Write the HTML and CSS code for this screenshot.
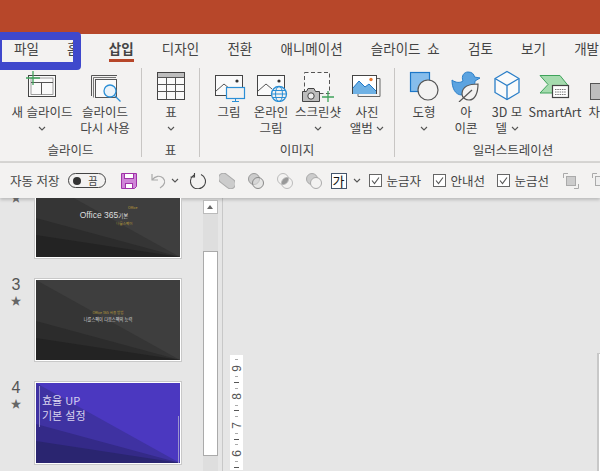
FILE: index.html
```html
<!DOCTYPE html>
<html lang="ko">
<head>
<meta charset="UTF-8">
<meta name="viewport" content="width=device-width, initial-scale=1.0">
<title>PowerPoint</title>
<link rel="stylesheet" href="styles.css">
</head>
<body>
<svg class="defs" width="0" height="0">
  <symbol id="chev" viewBox="0 0 8 5"><path d="M1 1l3 3 3-3" fill="none" stroke="#555" stroke-width="1.1"/></symbol>
  <symbol id="check" viewBox="0 0 13 13"><rect x=".5" y=".5" width="12" height="12" fill="#fff" stroke="#666"/><path d="M3 6.5l2.5 3L10 3.5" fill="none" stroke="#555" stroke-width="1.1"/></symbol>
</svg>
<div class="titlebar"></div>
<div class="tabs">
  <span>파일</span>
  <span class="tab-home">홈</span>
  <span class="tab-active">삽입</span>
  <span>디자인</span>
  <span>전환</span>
  <span>애니메이션</span>
  <span class="tab-show">슬라이드 쇼</span>
  <span>검토</span>
  <span>보기</span>
  <span>개발</span>
</div>
<div class="highlight"></div>

<div class="ribbon">
  <section class="group group-slide">
    <div class="items">
      <div class="btn w68">
        <svg class="ico" viewBox="0 0 40 34"><rect x="6.500" y="7.500" width="27" height="21" fill="#fafafa" stroke="#444"/><rect x="9" y="10" width="22" height="16.500" fill="none" stroke="#777" stroke-width=".7"/><path d="M9 14.500h22M19.500 14.500v12" stroke="#555" fill="none"/><path d="M11 3v14M4 10h14" stroke="#3fa35b" stroke-width="1.300"/></svg>
        <div class="lbl">새 슬라이드</div>
        <svg class="chev"><use href="#chev"/></svg>
      </div>
      <div class="btn w58">
        <svg class="ico" viewBox="0 0 40 34"><path d="M6.500 28V7.500H32" fill="none" stroke="#555"/><path d="M8.500 29.500V9.500H31" fill="none" stroke="#777"/><rect x="10.500" y="11.500" width="21" height="18" fill="#fafafa" stroke="#555"/><circle cx="25" cy="23" r="6" fill="#eaf3fa" stroke="#2b8fd6" stroke-width="1.300"/><path d="M29.500 27.500l6 6" stroke="#2b8fd6" stroke-width="1.300"/></svg>
        <div class="lbl">슬라이드<br>다시 사용</div>
      </div>
    </div>
    <div class="group-name">슬라이드</div>
  </section>
  <section class="group group-table">
    <div class="items">
      <div class="btn w42">
        <svg class="ico" viewBox="0 0 40 34"><rect x="6.500" y="4.500" width="27" height="27" fill="#fafafa" stroke="#444"/><rect x="7" y="5" width="26" height="4" fill="#bdbdbd"/><path d="M6.500 9.500h27M6.500 16.500h27M6.500 23.500h27M15.500 9.500v22M24.500 9.500v22" stroke="#555" fill="none"/></svg>
        <div class="lbl">표</div>
        <svg class="chev"><use href="#chev"/></svg>
      </div>
    </div>
    <div class="group-name">표</div>
  </section>
  <section class="group group-image">
    <div class="items">
      <div class="btn w42">
        <svg class="ico" viewBox="0 0 40 34"><rect x="6.500" y="7.500" width="27" height="20" fill="#fafafa" stroke="#444"/><path d="M7 23l8-7 6 5" fill="none" stroke="#555"/><circle cx="28" cy="13" r="1.600" fill="#333"/><rect x="17.500" y="19.500" width="18" height="11" fill="#f3f2f1" stroke="#2b8fd6" stroke-width="1.200"/><path d="M26.500 30.500v3M23 33.500h7" stroke="#2b8fd6"/></svg>
        <div class="lbl">그림</div>
      </div>
      <div class="btn w42">
        <svg class="ico" viewBox="0 0 40 34"><rect x="6.500" y="7.500" width="27" height="20" fill="#fafafa" stroke="#444"/><path d="M7 23l8-7 6 5" fill="none" stroke="#555"/><circle cx="28" cy="13" r="1.600" fill="#333"/><circle cx="28" cy="26" r="7.500" fill="#f3f2f1" stroke="#2b8fd6" stroke-width="1.300"/><ellipse cx="28" cy="26" rx="3.500" ry="7.500" fill="none" stroke="#2b8fd6"/><path d="M20.500 26h15M21.500 22.500h13M21.500 29.500h13" stroke="#2b8fd6" fill="none"/></svg>
        <div class="lbl">온라인<br>그림</div>
      </div>
      <div class="btn w52">
        <svg class="ico" viewBox="0 0 40 34"><rect x="6.500" y="4.500" width="25" height="21" fill="#f8f8f8" stroke="#555" stroke-dasharray="4 2.500"/><path d="M4.500 23.500h4l1.500-3h6l1.500 3h4v10h-17z" fill="#bdbdbd" stroke="#444"/><circle cx="13" cy="28" r="3.200" fill="#eee" stroke="#444"/><path d="M30 23v12M24 29h12" stroke="#3fa35b" stroke-width="1.300"/></svg>
        <div class="lbl">스크린샷</div>
        <svg class="chev"><use href="#chev"/></svg>
      </div>
      <div class="btn w46">
        <svg class="ico" viewBox="0 0 40 34"><path d="M29.500 10.500h3.500v18H11v-3" fill="#f3f2f1" stroke="#666"/><rect x="5.500" y="7.500" width="24" height="18" fill="#fff" stroke="#444"/><path d="M6 24V20l6-7 6 6 4-3 7 7v3H6z" fill="#6fb1e4"/><path d="M6 20l6-7 6 6 4-3 7 7" fill="none" stroke="#1d77c8"/><circle cx="24" cy="11.500" r="1.700" fill="#e8772e"/></svg>
        <div class="lbl">사진<br><span class="inline-chev">앨범 <svg class="chev"><use href="#chev"/></svg></span></div>
      </div>
    </div>
    <div class="group-name">이미지</div>
  </section>
  <section class="group group-illust">
    <div class="items">
      <div class="btn w42">
        <svg class="ico" viewBox="0 0 40 34"><rect x="6.500" y="4.500" width="19" height="19" fill="#86bdec" stroke="#1d77c8" stroke-width="1.200"/><circle cx="24" cy="22" r="10" fill="#f3f2f1" stroke="#555" stroke-width="1.200"/></svg>
        <div class="lbl">도형</div>
        <svg class="chev"><use href="#chev"/></svg>
      </div>
      <div class="btn w42">
        <svg class="ico" viewBox="0 0 40 34"><path d="M6 12C10 15 14 15 17 13 15 8 18 4 22 4 26 4 28 6 28.500 9L34 10 29 13C29 20 24 27 16 27 9 27 6 20 6 12z" fill="#5ba3e0" stroke="#2b7fc8"/><path d="M32 16C24 16 16 18 16 26 16 30 20 32 23 32 29 32 32 25 32 16z" fill="#f3f2f1" stroke="#555" stroke-width="1.200"/><path d="M13 34L26 22" stroke="#555" stroke-width="1.200"/></svg>
        <div class="lbl">아<br>이콘</div>
      </div>
      <div class="btn w40">
        <svg class="ico" viewBox="0 0 40 34"><path d="M20 3.500l12 7v14l-12 7-12-7v-14z" fill="#fafafa" stroke="#2b7fc8" stroke-width="1.300"/><path d="M8 10.500l12 7 12-7M20 17.500v14" fill="none" stroke="#2b7fc8" stroke-width="1.300"/></svg>
        <div class="lbl">3D 모<br><span class="inline-chev">델 <svg class="chev"><use href="#chev"/></svg></span></div>
      </div>
      <div class="btn w56">
        <svg class="ico" viewBox="0 0 40 34"><path d="M5 7.500h20l8 10-8 7.500H5l8-8.500z" fill="#a5dbae" stroke="#3fa35b"/><rect x="17.500" y="17.500" width="16" height="12" fill="#fff" stroke="#444" stroke-width="1.200"/><path d="M20 21.500h11M20 24h11M20 26.500h11" stroke="#555" stroke-width=".8" stroke-dasharray="1.500 .8"/></svg>
        <div class="lbl">SmartArt</div>
      </div>
      <div class="btn w34">
        <svg class="ico" viewBox="0 0 40 34"><rect x="10.500" y="15.500" width="10" height="16" fill="#bdbdbd" stroke="#555"/><rect x="20.500" y="4.500" width="10" height="27" fill="#f3f2f1" stroke="#555"/></svg>
        <div class="lbl">차트</div>
      </div>
    </div>
    <div class="group-name">일러스트레이션</div>
  </section>
</div>

<div class="qat">
  <span class="autosave">자동 저장</span>
  <span class="toggle"><i></i><b>끔</b></span>
  <svg class="qi save" viewBox="0 0 16 16"><path d="M.5.5h15v13l-2 2H.500z" fill="#cf86d8" stroke="#a033a8"/><rect x="3.500" y=".5" width="9" height="5" fill="#fff" stroke="#a033a8"/><rect x="4.500" y="10.500" width="7" height="5" fill="#fff" stroke="#a033a8"/></svg>
  <svg class="qi undo" viewBox="0 0 16 16"><path d="M1 1v6h6M1 7c3-4 8-5 11-2s2 7-3 10" fill="none" stroke="#aaa" stroke-width="1.200"/></svg>
  <svg class="chev undo-chev"><use href="#chev"/></svg>
  <svg class="qi redo" viewBox="0 0 16 16"><path d="M11 1.500A7.500 7.500 0 1 1 4 2M4.500 0v4h-4" fill="none" stroke="#444" stroke-width="1.100"/></svg>
  <svg class="qi merge" viewBox="0 0 16 16"><rect x="-1.500" y="3" width="19" height="10" rx="5" transform="rotate(38 8 8)" fill="#ccc" stroke="#aaa"/></svg>
  <svg class="qi merge" viewBox="0 0 16 16"><circle cx="6" cy="6" r="5.500" fill="#ccc" stroke="#999"/><circle cx="10" cy="10" r="5.500" fill="#ddd" fill-opacity=".6" stroke="#888"/></svg>
  <svg class="qi merge" viewBox="0 0 16 16"><circle cx="6" cy="6" r="5.500" fill="none" stroke="#bbb"/><circle cx="10" cy="10" r="5.500" fill="none" stroke="#bbb"/><path d="M11 5a5 5 0 0 1-6 6 5 5 0 0 1 6-6z" fill="#999"/></svg>
  <svg class="qi merge" viewBox="0 0 16 16"><circle cx="6" cy="6" r="5.500" fill="#ccc" stroke="#aaa"/><circle cx="10" cy="10" r="5.500" fill="#f3f2f1" stroke="#aaa"/></svg>
  <span class="ga">가</span>
  <svg class="chev ga-chev"><use href="#chev"/></svg>
  <label class="chk first-chk"><svg><use href="#check"/></svg>눈금자</label>
  <label class="chk"><svg><use href="#check"/></svg>안내선</label>
  <label class="chk"><svg><use href="#check"/></svg>눈금선</label>
  <svg class="qi arr first-arr" viewBox="0 0 16 16"><path d="M5 .5H.5V5M11 15.500h4.500V11" fill="none" stroke="#aaa"/><rect x="3.500" y="3.500" width="9" height="9" fill="#ccc" stroke="#aaa"/></svg>
  <svg class="qi arr" viewBox="0 0 16 16"><path d="M5 .5H.5V5M11 15.500h4.500V11" fill="none" stroke="#aaa"/><rect x="3.500" y="3.500" width="9" height="9" fill="#eee" stroke="#aaa"/></svg>
</div>

<div class="main">
  <div class="thumbs">
    <div class="thumb-row">
      <div class="num"><span>2</span><em>★</em></div>
      <div class="slide">
        <svg class="rays" viewBox="0 0 144 80" preserveAspectRatio="none"><rect width="144" height="80" fill="#3e3e3e"/><path d="M0 0L144 80H0z" fill="#353535"/><path d="M0 41L144 80H0z" fill="#2c2c2c"/><path d="M0 58L144 80H0z" fill="#232323"/></svg>
        <div class="cover-text end">
          <span class="tiny upper">Office</span>
          <span class="big">Office 365<small>기본</small></span>
          <span class="tiny lower">나를스펙이</span>
        </div>
      </div>
    </div>
    <div class="thumb-row">
      <div class="num"><span>3</span><em>★</em></div>
      <div class="slide">
        <svg class="rays" viewBox="0 0 144 80" preserveAspectRatio="none"><rect width="144" height="80" fill="#3e3e3e"/><path d="M0 0L144 80H0z" fill="#353535"/><path d="M0 41L144 80H0z" fill="#2c2c2c"/><path d="M0 58L144 80H0z" fill="#232323"/></svg>
        <div class="cover-text raised"><span class="tiny">Office 365 사용 방법</span><span class="tiny white">나를스펙이 다음스펙의 능력</span></div>
      </div>
    </div>
    <div class="thumb-row">
      <div class="num"><span>4</span><em>★</em></div>
      <div class="slide">
        <svg class="rays" viewBox="0 0 144 80" preserveAspectRatio="none"><rect width="144" height="80" fill="#4b38c0"/><path d="M0 0L144 80H0z" fill="#3f32a2"/><path d="M0 41L144 80H0z" fill="#342a88"/><path d="M0 58L144 80H0z" fill="#2a2570"/><path d="M3.500 3v41M142.500 33v47" stroke="#9a94cc"/></svg>
        <div class="purple-text">효율 UP<br>기본 설정</div>
      </div>
    </div>
  </div>
  <div class="scrollbar">
    <div class="scroll-btn"></div>
    <div class="scroll-thumb"></div>
  </div>
  <div class="workspace">
    <div class="ruler">
      <div class="mark"><i></i><span>9</span><i></i><u></u></div>
      <div class="mark"><i></i><span>8</span><i></i><u></u></div>
      <div class="mark"><i></i><span>7</span><i></i><u></u></div>
      <div class="mark"><i></i><span>6</span><i></i><u></u></div>
    </div>
    <div class="page"></div>
  </div>
</div>
</body>
</html>
```

FILE: styles.css
```css
html, body {
  height: 100%;
  margin: 0;
}

body {
  width: 600px;
  height: 471px;
  overflow: hidden;
  position: relative;
  background-color: #e6e6e6;
  color: #444;
  font-family: "Noto Sans CJK KR", "Noto Sans", sans-serif;
  font-size: 12.5px;
}

.defs {
  position: absolute;
}

.titlebar {
  height: 34px;
  background-color: #b7472a;
}

.tabs {
  height: 28px;
  display: flex;
  align-items: center;
  gap: 28.25px;
  padding: 0 0 0 14px;
  background-color: #f3f2f1;
  white-space: nowrap;
  font-size: 13.5px;
  line-height: 28px;
  overflow: hidden;
}

.tab-home {
  margin-right: 1px;
}

.tab-show {
  word-spacing: 3px;
}

.tab-active {
  font-weight: 700;
  color: #444;
  position: relative;
}

.tab-active::after {
  content: "";
  position: absolute;
  left: 0;
  right: 0;
  bottom: 0;
  height: 3px;
  background-color: #b7472a;
}

.highlight {
  position: absolute;
  left: -6px;
  top: 32px;
  width: 71px;
  height: 22px;
  border: 8px solid #3f48cc;
  border-radius: 4px;
}

.ribbon {
  height: 99px;
  display: flex;
  background-color: #f3f2f1;
  border-bottom: 2px solid #d6d5d3;
  overflow: hidden;
}

.group {
  flex: none;
  display: flex;
  flex-direction: column;
  border-right: 1px solid #c8c6c4;
  margin-top: 6px;
  height: 89px;
  box-sizing: border-box;
}

.group-slide { width: 142px; padding-left: 8px; }
.group-table { width: 58px; padding-left: 8px; }
.group-image { width: 195px; padding-left: 8px; }
.group-illust { width: 236px; padding-left: 8px; border-right: none; }

.items {
  display: flex;
  flex: none;
  height: 75px;
}

.btn {
  flex: none;
  display: flex;
  flex-direction: column;
  align-items: center;
  text-align: center;
}

.w34 { width: 34px; }
.w40 { width: 40px; }
.w42 { width: 42px; }
.w46 { width: 46px; }
.w52 { width: 52px; }
.w56 { width: 56px; }
.w58 { width: 58px; }
.w68 { width: 68px; }

.ico {
  flex: none;
  width: 40px;
  height: 34px;
}

.lbl {
  margin-top: 2px;
  line-height: 16px;
  white-space: nowrap;
}

.btn > .chev {
  margin-top: 6px;
}

.chev {
  width: 8px;
  height: 5px;
  flex: none;
}

.inline-chev .chev {
  vertical-align: 2px;
}

.group-name {
  flex: none;
  margin-left: -8px;
  text-align: center;
  line-height: 14px;
}

.qat {
  height: 35px;
  display: flex;
  align-items: center;
  padding-left: 10px;
  background-color: #f3f2f1;
  box-shadow: 0 2px 3px rgba(0, 0, 0, 0.18);
  position: relative;
  white-space: nowrap;
  overflow: hidden;
}

.qat > * {
  flex: none;
}

.toggle {
  width: 38px;
  height: 15px;
  box-sizing: border-box;
  margin-left: 8px;
  display: flex;
  align-items: center;
  justify-content: space-between;
  padding: 0 7px 0 4px;
  border: 1px solid #444;
  border-radius: 8px;
  font-size: 10px;
  line-height: 13px;
}

.toggle i {
  width: 8px;
  height: 8px;
  border-radius: 50%;
  background-color: #333;
}

.toggle b {
  font-weight: 400;
}

.qi {
  width: 16px;
  height: 16px;
}

.save { margin-left: 15px; }
.undo { margin-left: 14px; }
.undo-chev { margin-left: 4px; }
.redo { margin-left: 11px; }
.merge { margin-left: 13px; }

.ga {
  margin-left: 9px;
  width: 16px;
  height: 16px;
  box-sizing: border-box;
  border: 1px solid #44546a;
  background-color: #fff;
  color: #111;
  font-size: 13px;
  line-height: 14px;
  text-align: center;
  overflow: hidden;
}

.ga-chev { margin-left: 6px; }

.chk {
  display: flex;
  align-items: center;
  gap: 5px;
  margin-left: 11.500px;
}

.chk svg {
  width: 13px;
  height: 13px;
}

.first-chk { margin-left: 8px; }
.first-arr { margin-left: 14px; }
.arr + .arr { margin-left: 13px; }

.main {
  height: 273px;
  display: flex;
  overflow: hidden;
}

.thumbs {
  flex: none;
  width: 203px;
  margin-top: -23px;
  padding-left: 34px;
  box-sizing: border-box;
}

.thumb-row {
  display: flex;
  height: 84px;
  margin-bottom: 19px;
  position: relative;
}

.num {
  position: absolute;
  left: -34px;
  top: -2px;
  width: 32px;
  text-align: center;
  color: #555;
  font-family: "Liberation Sans", sans-serif;
  font-size: 16px;
  line-height: 18px;
}

.num span {
  display: block;
}

.num em {
  display: block;
  font-family: "Noto Sans CJK KR", sans-serif;
  font-style: normal;
  font-size: 11px;
  line-height: 12px;
  color: #666;
}

.slide {
  width: 148px;
  height: 84px;
  box-sizing: border-box;
  border: 1px solid #c8c8c8;
  outline: 1px solid #fff;
  outline-offset: -2px;
  position: relative;
  display: flex;
  flex-direction: column;
  align-items: center;
  justify-content: center;
  overflow: hidden;
}

.rays {
  position: absolute;
  left: 1px;
  top: 1px;
  width: 144px;
  height: 80px;
}

.cover-text {
  position: relative;
  display: flex;
  flex-direction: column;
  align-items: center;
  line-height: 1.2;
}

.cover-text.end {
  align-items: flex-end;
  margin: -2px 0 0 -8px;
}

.cover-text.raised {
  margin-top: -8px;
}

.upper {
  margin-right: -9px;
}

.lower {
  margin-right: -4px;
}

.big {
  color: #ddd;
  font-size: 8.500px;
  line-height: 9px;
  font-family: "Liberation Sans", "Noto Sans CJK KR", sans-serif;
}

.big small {
  font-size: 5.500px;
}

.tiny {
  color: #b79a3a;
  font-size: 3.500px;
  line-height: 6px;
}

.tiny.white {
  color: #ddd;
  font-size: 4.200px;
}

.purple-text {
  position: relative;
  align-self: flex-start;
  margin: -30px 0 0 7px;
  color: #d8d4ee;
  font-size: 11px;
  line-height: 15px;
}

.scrollbar {
  flex: none;
  width: 15px;
  margin-top: 2px;
  background-color: #dedede;
}

.scroll-btn {
  height: 14px;
  box-sizing: border-box;
  background-color: #fff;
  border: 1px solid #bbb;
  position: relative;
}

.scroll-btn::after {
  content: "";
  position: absolute;
  left: 3px;
  top: 4px;
  border-left: 3.500px solid transparent;
  border-right: 3.500px solid transparent;
  border-bottom: 4px solid #666;
}

.scroll-thumb {
  height: 205px;
  margin-top: 37px;
  box-sizing: border-box;
  background-color: #fff;
  border: 1px solid #aaa;
}

.workspace {
  flex: 1;
  margin-left: 4px;
  border-left: 1px solid #c8c8c8;
  display: flex;
  align-items: flex-start;
}

.ruler {
  width: 13px;
  margin: 157px 0 0 7px;
  padding-top: 2px;
  background-color: #fff;
}

.mark {
  height: 28.300px;
  display: flex;
  flex-direction: column;
  align-items: center;
  justify-content: space-around;
  font-family: "Liberation Sans", sans-serif;
  font-size: 12px;
  line-height: 12px;
  color: #555;
}

.mark span {
  writing-mode: vertical-rl;
  transform: rotate(180deg);
}

.mark i {
  width: 3px;
  height: 1px;
  background-color: #aaa;
}

.mark u {
  width: 5px;
  height: 1px;
  background-color: #555;
}

.page {
  width: 1px;
  height: 130px;
  margin: 155px 0 0 auto;
  background-color: #fff;
  border-top: 1px solid #c8c8c8;
  border-left: 2px solid #c8c8c8;
}
```
